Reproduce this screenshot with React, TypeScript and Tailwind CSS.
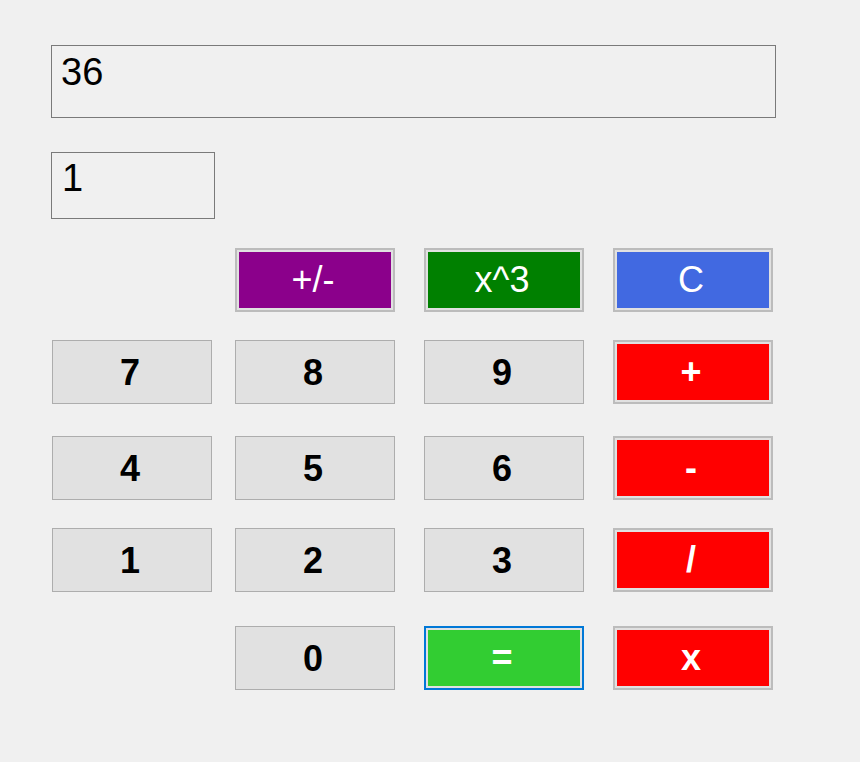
import React from 'react';

type Key = {
  label: string;
  col: number;
  row: number;
  fill?: string;
  bold?: boolean;
  focused?: boolean;
};

const keys: Key[] = [
  { label: '+/-', col: 2, row: 1, fill: 'bg-[#8b008b]' },
  { label: 'x^3', col: 3, row: 1, fill: 'bg-[#008000]' },
  { label: 'C', col: 4, row: 1, fill: 'bg-[#4169e1]' },
  { label: '7', col: 1, row: 2 },
  { label: '8', col: 2, row: 2 },
  { label: '9', col: 3, row: 2 },
  { label: '+', col: 4, row: 2, fill: 'bg-[#ff0000]', bold: true },
  { label: '4', col: 1, row: 3 },
  { label: '5', col: 2, row: 3 },
  { label: '6', col: 3, row: 3 },
  { label: '-', col: 4, row: 3, fill: 'bg-[#ff0000]', bold: true },
  { label: '1', col: 1, row: 4 },
  { label: '2', col: 2, row: 4 },
  { label: '3', col: 3, row: 4 },
  { label: '/', col: 4, row: 4, fill: 'bg-[#ff0000]', bold: true },
  { label: '0', col: 2, row: 5 },
  { label: '=', col: 3, row: 5, fill: 'bg-[#32cd32]', bold: true, focused: true },
  { label: 'x', col: 4, row: 5, fill: 'bg-[#ff0000]', bold: true },
];

const colStart: Record<number, string> = {
  1: 'col-start-1',
  2: 'col-start-2',
  3: 'col-start-3',
  4: 'col-start-4',
};

const rowStart: Record<number, string> = {
  1: 'row-start-1',
  2: 'row-start-2',
  3: 'row-start-3',
  4: 'row-start-4',
  5: 'row-start-5',
};

const CalcKey: React.FC<{ k: Key }> = ({ k }) => {
  const place = `${colStart[k.col]} ${rowStart[k.row]}`;

  if (!k.fill) {
    return (
      <button
        className={`${place} w-[160px] h-[64px] pr-[4px] pt-[2px] bg-[#e1e1e1] border border-[#adadad] flex items-center justify-center text-[36px] font-bold text-black leading-none`}
      >
        {k.label}
      </button>
    );
  }

  return (
    <button
      className={`${place} w-[160px] h-[64px] p-[2px] bg-[#e1e1e1] border-2 ${
        k.focused ? 'border-[#0078d7]' : 'border-[#bcbcbc]'
      }`}
    >
      <span
        className={`${k.fill} w-full h-full pr-[4px] flex items-center justify-center text-white text-[36px] leading-none ${
          k.bold ? 'font-bold' : 'font-normal'
        }`}
      >
        {k.label}
      </span>
    </button>
  );
};

export default function App() {
  return (
    <div
      className="w-[860px] h-[762px] bg-[#f0f0f0] pt-[45px] pl-[51px]"
      style={{ fontFamily: '"Liberation Sans", Arial, sans-serif' }}
    >
      {/* result display */}
      <div className="w-[725px] h-[73px] border border-[#7a7a7a] pt-[7px] pl-[9px] text-[38px] leading-none text-black">
        36
      </div>

      {/* operand input */}
      <div className="mt-[34px] w-[164px] h-[67px] border border-[#7a7a7a] pt-[6px] pl-[10px] text-[38px] leading-none text-black">
        1
      </div>

      {/* keypad */}
      <div className="mt-[29px] ml-[1px] grid grid-cols-[183px_189px_189px_160px] grid-rows-[92px_96px_92px_98px_64px]">
        {keys.map((k) => (
          <CalcKey key={k.label} k={k} />
        ))}
      </div>
    </div>
  );
}
